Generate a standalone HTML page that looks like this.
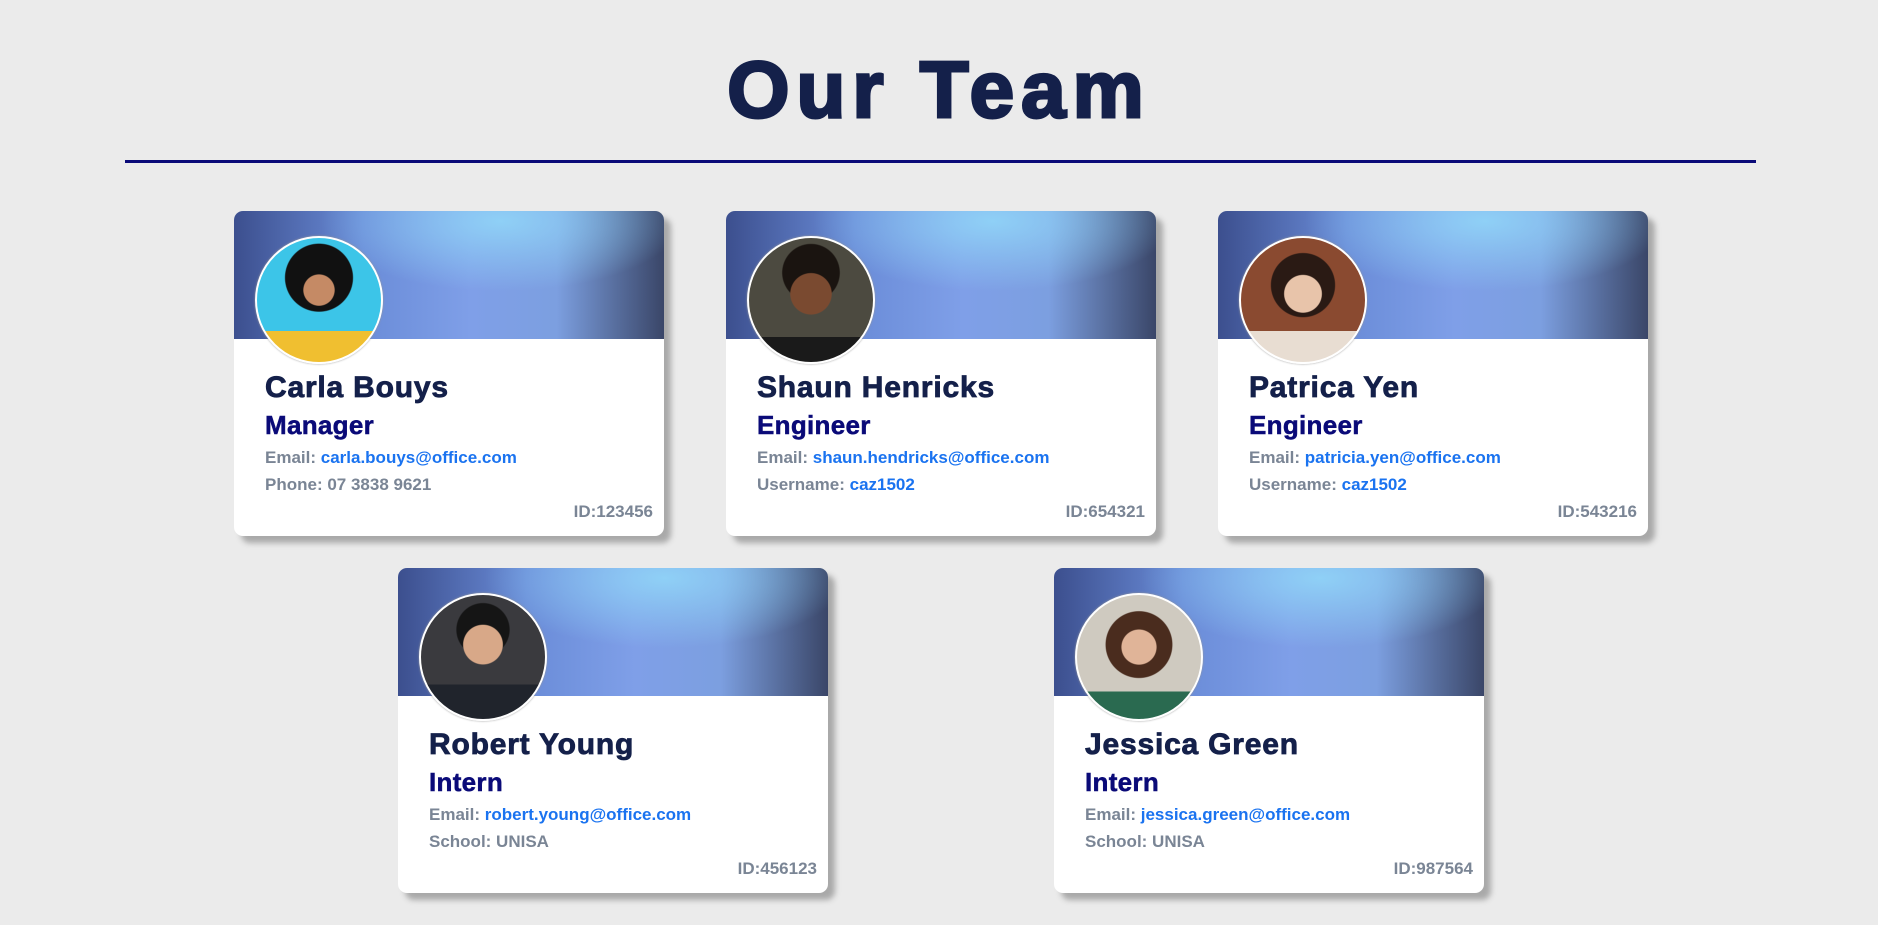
<!DOCTYPE html>
<html><head><style>
body{margin:0;width:1878px;height:925px;background:#ebebeb;font-family:"Liberation Sans",Arial,sans-serif;position:relative;overflow:hidden}
h1{position:absolute;top:45px;left:0;width:1878px;text-align:center;margin:0;font-size:80px;line-height:90px;font-weight:900;color:#14204a;letter-spacing:7px;-webkit-text-stroke:3px #14204a}
.line{position:absolute;left:125px;top:160px;width:1631px;height:3px;background:#0a0a78}
.card{position:absolute;width:430px;height:325px;background:#fff;border-radius:9px;box-shadow:7px 7px 6px #a9a9a9;overflow:hidden}
.ban{position:absolute;left:0;top:0;width:430px;height:128px;background:radial-gradient(ellipse 180px 70px at 62% 8%,#8fd0f6 0%,rgba(143,208,246,0) 100%),linear-gradient(90deg,#3c4f8e 0%,#6a8cd8 30%,#7f9fe8 55%,#7c9fe0 75%,#3a4668 100%)}
.av{position:absolute;left:21px;top:25px;width:124px;height:124px;border-radius:50%;border:2px solid #fff;box-shadow:0 0 2px #999;overflow:hidden}
.nm{position:absolute;left:31px;top:160px;font-size:30px;font-weight:bold;color:#14204a;letter-spacing:.8px;-webkit-text-stroke:.8px #14204a}
.rl{position:absolute;left:31px;top:199px;font-size:26px;font-weight:bold;color:#0a0a78;letter-spacing:.3px;-webkit-text-stroke:.5px #0a0a78}
.i1,.i2{position:absolute;left:31px;font-size:17px;font-weight:bold;color:#7a8595}
.i1{top:237px}.i2{top:264px}
.i1 span,.i2 span{color:#1a73f0}
.id{position:absolute;right:11px;top:291px;font-size:17px;font-weight:bold;color:#7a8595}
</style></head><body>
<h1>Our Team</h1>
<div class="line"></div>

<div class="card" style="left:234px;top:211px">
<div class="ban"></div>
<div class="av" style="background:radial-gradient(circle at 50% 42%,#c58a65 0 16%,transparent 17%),radial-gradient(circle at 50% 32%,#111 0 32%,transparent 33%),linear-gradient(#3cc5e8 0 75%,#f0bf30 75%)"></div>
<div class="nm">Carla Bouys</div><div class="rl">Manager</div>
<div class="i1">Email: <span>carla.bouys@office.com</span></div>
<div class="i2">Phone: 07 3838 9621</div>
<div class="id">ID:123456</div></div>

<div class="card" style="left:726px;top:211px">
<div class="ban"></div>
<div class="av" style="background:radial-gradient(circle at 50% 45%,#7a4a30 0 22%,transparent 23%),radial-gradient(circle at 50% 28%,#1a1410 0 26%,transparent 27%),linear-gradient(#4c4a40 0 80%,#1a1a1a 80%)"></div>
<div class="nm">Shaun Henricks</div><div class="rl">Engineer</div>
<div class="i1">Email: <span>shaun.hendricks@office.com</span></div>
<div class="i2">Username: <span>caz1502</span></div>
<div class="id">ID:654321</div></div>

<div class="card" style="left:1218px;top:211px">
<div class="ban"></div>
<div class="av" style="background:radial-gradient(circle at 50% 45%,#e8c4aa 0 20%,transparent 21%),radial-gradient(circle at 50% 38%,#2a1a14 0 32%,transparent 33%),linear-gradient(#8a4a30 0 75%,#e8ddd2 75%)"></div>
<div class="nm">Patrica Yen</div><div class="rl">Engineer</div>
<div class="i1">Email: <span>patricia.yen@office.com</span></div>
<div class="i2">Username: <span>caz1502</span></div>
<div class="id">ID:543216</div></div>

<div class="card" style="left:398px;top:568px">
<div class="ban"></div>
<div class="av" style="background:radial-gradient(circle at 50% 40%,#d8a888 0 20%,transparent 21%),radial-gradient(circle at 50% 28%,#151515 0 24%,transparent 25%),linear-gradient(#3a3a3e 0 72%,#20242c 72%)"></div>
<div class="nm">Robert Young</div><div class="rl">Intern</div>
<div class="i1">Email: <span>robert.young@office.com</span></div>
<div class="i2">School: UNISA</div>
<div class="id">ID:456123</div></div>

<div class="card" style="left:1054px;top:568px">
<div class="ban"></div>
<div class="av" style="background:radial-gradient(circle at 50% 42%,#e0b498 0 18%,transparent 19%),radial-gradient(circle at 50% 40%,#4a2c1e 0 34%,transparent 35%),linear-gradient(#cfcac0 0 78%,#2a6a50 78%)"></div>
<div class="nm">Jessica Green</div><div class="rl">Intern</div>
<div class="i1">Email: <span>jessica.green@office.com</span></div>
<div class="i2">School: UNISA</div>
<div class="id">ID:987564</div></div>
</body></html>
